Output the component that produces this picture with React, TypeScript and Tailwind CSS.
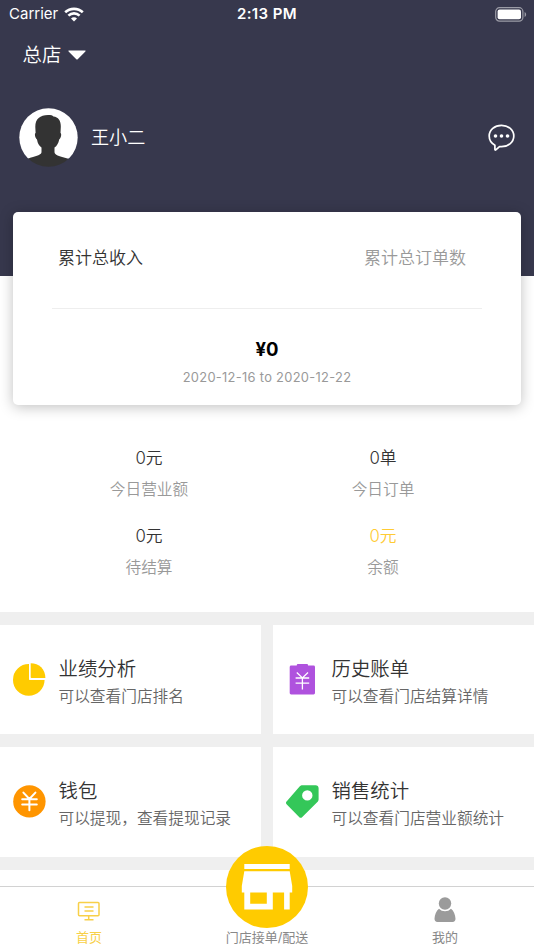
import type { ReactNode } from "react";

// Store manager home: header, income card, today's numbers, menu grid, tab bar.

const STATS = [
  { value: "0元", label: "今日营业额" },
  { value: "0单", label: "今日订单" },
  { value: "0元", label: "待结算" },
  { value: "0元", label: "余额", highlight: true },
];

const MENUS = [
  { title: "业绩分析", desc: "可以查看门店排名", icon: <PieIcon /> },
  { title: "历史账单", desc: "可以查看门店结算详情", icon: <BillIcon /> },
  { title: "钱包", desc: "可以提现，查看提现记录", icon: <WalletIcon /> },
  { title: "销售统计", desc: "可以查看门店营业额统计", icon: <TagIcon /> },
];

function WifiIcon() {
  return (
    <svg width="20" height="15" viewBox="0 0 20 15" fill="none" stroke="#fff" strokeWidth="2.6">
      <path d="M1.2 5.3C6 .7 14 .7 18.8 5.3" />
      <path d="M4.4 8.6c3.2-3 8-3 11.2 0" />
      <path d="M10 14.4l-3-3c1.6-1.5 4.4-1.5 6 0z" fill="#fff" stroke="none" />
    </svg>
  );
}

function BatteryIcon() {
  return (
    <svg width="32" height="15" viewBox="0 0 32 15">
      <rect x=".7" y=".7" width="27.2" height="13.4" rx="3.8" fill="none" stroke="#fff" strokeOpacity=".5" strokeWidth="1.2" />
      <rect x="2.6" y="2.6" width="23.4" height="9.6" rx="2" fill="#fff" />
      <path d="M29.6 5v5c2-.8 2-4.2 0-5z" fill="#fff" fillOpacity=".5" />
    </svg>
  );
}

function Avatar() {
  return (
    <svg width="59" height="59" viewBox="0 0 59 59">
      <defs>
        <clipPath id="avatar">
          <circle cx="29.5" cy="29.5" r="29.2" />
        </clipPath>
      </defs>
      <g clipPath="url(#avatar)">
        <path d="M0 0h59v50.500H0z" fill="#fff" />
        <path
          fill="#333"
          d="M29 7c3 0 4.600.4 5.400 1.600C39.500 9 42 13 41.800 19l-.3 6c1.200.3.8 5-1.300 6.400-.8 4-2.200 6.200-4.700 8.200v4.500c0 2.500 4 4.200 8.500 5.200 4 1 6.500 2.500 8.500 4.700V62H5v-8c2-2.400 5-3.900 9-4.900 4.500-1.200 8.500-2.500 8.500-5v-4.500c-2.600-2-3.800-4.300-4.500-8.200-2.200-1.400-2.600-6.100-1.400-6.400L16.300 19C16.200 11 21 7 29 7z"
        />
      </g>
    </svg>
  );
}

function MessageIcon() {
  return (
    <svg width="27" height="27" viewBox="0 0 27 27" fill="none" stroke="#fff" strokeWidth="1.7" strokeLinejoin="round">
      <path d="M13.500 1.300C6.600 1.300 1.200 6 1.200 12c0 3.900 2.300 7.300 5.700 9.200v4.300c0 .6.500.7.900.4l3.700-3.300 2 .1c6.900 0 12.300-4.700 12.300-10.700S20.400 1.300 13.500 1.300z" />
      <g fill="#fff" stroke="none">
        <circle cx="7.500" cy="12" r="1.800" />
        <circle cx="13.500" cy="12" r="1.800" />
        <circle cx="19.500" cy="12" r="1.800" />
      </g>
    </svg>
  );
}

function PieIcon() {
  return (
    <svg width="33" height="33" viewBox="0 0 33 33" fill="#ffcb00">
      <path d="M16 1.100a15.800 15.800 0 1 0 15.600 16H17.200A1.200 1.200 0 0 1 16 15.900z" />
      <path d="M17.700.3v14c0 .5.300.8.800.8h13.900C32.400 6.300 26 .3 17.700.3z" />
    </svg>
  );
}

function BillIcon() {
  return (
    <svg width="33" height="33" viewBox="0 0 33 33">
      <g fill="#af52de">
        <rect x="3.700" y="2.500" width="25.300" height="28.900" rx="1.400" />
        <rect x="10.800" y="1.100" width="11.200" height="4" rx="1" />
      </g>
      <path fill="none" stroke="#fff" strokeWidth="1.300" d="M10.800 9.500l5.600 5.400L22 9.500M9.600 15h13.600M9.600 20.200h13.600M16.400 15v11.500" />
    </svg>
  );
}

function WalletIcon() {
  return (
    <svg width="33" height="33" viewBox="0 0 33 33">
      <circle cx="16.400" cy="16.400" r="16.200" fill="#ff9500" />
      <path
        fill="none"
        stroke="#fff"
        strokeWidth="2"
        strokeLinecap="round"
        d="M10.400 7.600l6 6.400 6-6.400M9.200 14.200h14.600M9.200 19.400h14.600M16.400 14.200v11"
      />
    </svg>
  );
}

function TagIcon() {
  return (
    <svg width="33" height="33" viewBox="0 0 33 33">
      <path
        fill="#34c759"
        fillRule="evenodd"
        d="M16.600.3h13c1.800 0 3 1.200 3 3v11c0 1.200-.4 2-1.200 2.800L16.300 31.900a2.200 2.200 0 0 1-3.200 0L.8 19.400a2.200 2.200 0 0 1 0-3.200L13.600 1.500C14.500.6 15.300.3 16.600.3zM21.300 5.200a5.200 5.200 0 1 0 0 10.400 5.200 5.200 0 0 0 0-10.400z"
      />
    </svg>
  );
}

function HomeIcon() {
  return (
    <svg width="24" height="20" viewBox="0 0 24 20" fill="none" stroke="#f8d048" strokeWidth="1.500">
      <rect x="1.500" y="1.500" width="20.500" height="13.300" rx="1" />
      <path d="M7.500 6h9M7.500 10h9M11.700 15v3.500M7.500 18.700h9" />
    </svg>
  );
}

function ShopIcon() {
  return (
    <svg width="52" height="46" viewBox="0 0 52 46" fill="#fff">
      <path d="M3.300 0h45.400v5H3.300zM3.300 7.200h45.400L51.200 22v6.600h-2.500v17h-5.600v-17H31.800v17H3.300v-17H.8V22zM9.200 28.600v11.200h16.600V28.600z" fillRule="evenodd" />
    </svg>
  );
}

function UserIcon() {
  return (
    <svg width="22" height="26" viewBox="0 0 22 26" fill="#9b9b9b">
      <circle cx="11" cy="6.500" r="6.200" />
      <path d="M5 11.800a8.300 8.300 0 0 0 12 0c2.700 2 4.300 5.700 4.500 10 0 2-1 3.200-3 3.200h-15c-2 0-3-1.200-3-3.200.2-4.300 1.800-8 4.500-10z" />
    </svg>
  );
}

function MenuCell({ title, desc, icon }: { title: string; desc: string; icon: ReactNode }) {
  return (
    <div className="flex items-center bg-white pl-[13px]">
      {icon}
      <div className="ml-[12.5px] pt-[5px] whitespace-nowrap">
        <div className="text-[19.4px] leading-7 text-[#333]">{title}</div>
        <div className="text-[15.7px] leading-[27px] text-[#666]">{desc}</div>
      </div>
    </div>
  );
}

export default function App() {
  return (
    <div className="relative flex h-[950px] w-[534px] flex-col overflow-hidden bg-white font-[Inter,'Noto_Sans_CJK_SC',sans-serif] font-[350]">
      <header className="h-[276px] shrink-0 bg-[#37384d] text-white">
        <div className="grid h-7 grid-cols-3 items-center pl-[9px] pr-[7px]">
          <div className="flex items-center gap-[6px] text-[15px] font-normal">
            Carrier <WifiIcon />
          </div>
          <div className="-ml-[2px] text-center text-[15px] font-semibold tracking-[0.4px]">2:13 PM</div>
          <div className="flex justify-end">
            <BatteryIcon />
          </div>
        </div>
        <div className="flex h-[52px] items-center gap-[7px] pl-[22.5px] pt-[3px] text-[19.4px]">
          总店
          <svg className="mb-[2px]" width="18" height="10" viewBox="0 0 18 10" fill="#fff">
            <path d="M1 .5h16c.6 0 .8.500.4.900L9.700 9.200a1 1 0 0 1-1.400 0L.6 1.400C.2 1 .4.5 1 .5z" />
          </svg>
        </div>
        <div className="mt-[28px] flex h-[59px] items-center pl-[19px] pr-[19px]">
          <Avatar />
          <span className="ml-[13px] pt-px text-[18.100px]">王小二</span>
          <div className="ml-auto">
            <MessageIcon />
          </div>
        </div>
      </header>

      <section className="relative z-10 mx-[13px] -mt-[64px] h-[193px] shrink-0 rounded-[5px] bg-white px-[39px] shadow-[0_2px_14px_rgba(0,0,0,0.25)]">
        <div className="flex h-[97px] items-center justify-between border-b border-[#eee] pb-[3px] pl-[6px] pr-[16px] text-[17px]">
          <span className="text-[#333]">累计总收入</span>
          <span className="text-[#999]">累计总订单数</span>
        </div>
        <div className="mt-[26px] text-center text-[18.500px] font-bold leading-7 text-black">¥0</div>
        <div className="mt-[5px] text-center text-[12.900px] font-normal leading-5 tracking-[0.3px] text-[#999]">
          2020-12-16 to 2020-12-22
        </div>
      </section>

      <section className="grid h-[207px] shrink-0 grid-cols-[234px_234px] content-start justify-center pr-[2px] pt-[37px] text-center">
        {STATS.map((s) => (
          <div key={s.label} className="h-[77.500px]">
            <div className={s.highlight ? "text-[16.800px] leading-8 text-[#ffcb33]" : "text-[16.800px] leading-8 text-[#333]"}>
              {s.value}
            </div>
            <div className="text-[15.700px] leading-8 text-[#999]">{s.label}</div>
          </div>
        ))}
      </section>

      <section className="grid h-[258px] shrink-0 auto-rows-[109.500px] grid-cols-2 gap-x-3 gap-y-[12.750px] bg-[#efefef] pt-[12.750px]">
        {MENUS.map((m) => (
          <MenuCell key={m.title} title={m.title} desc={m.desc} icon={m.icon} />
        ))}
      </section>

      <nav className="absolute inset-x-0 bottom-0 grid h-16 grid-cols-3 border-t border-[#d2d2d2] bg-white text-center text-[13px] font-normal leading-5 text-[#888]">
        <div className="flex flex-col items-center justify-end pb-[3px] text-[#f8d048]">
          <HomeIcon />
          <span className="mt-[6px]">首页</span>
        </div>
        <div className="relative flex items-end justify-center pb-[3px]">
          <div className="absolute -top-[41px] left-1/2 flex size-[82px] -translate-x-1/2 items-center justify-center rounded-full bg-[#ffcb00]">
            <ShopIcon />
          </div>
          <span>门店接单/配送</span>
        </div>
        <div className="flex flex-col items-center justify-end pb-[3px]">
          <UserIcon />
          <span className="mt-[4px]">我的</span>
        </div>
      </nav>
    </div>
  );
}
